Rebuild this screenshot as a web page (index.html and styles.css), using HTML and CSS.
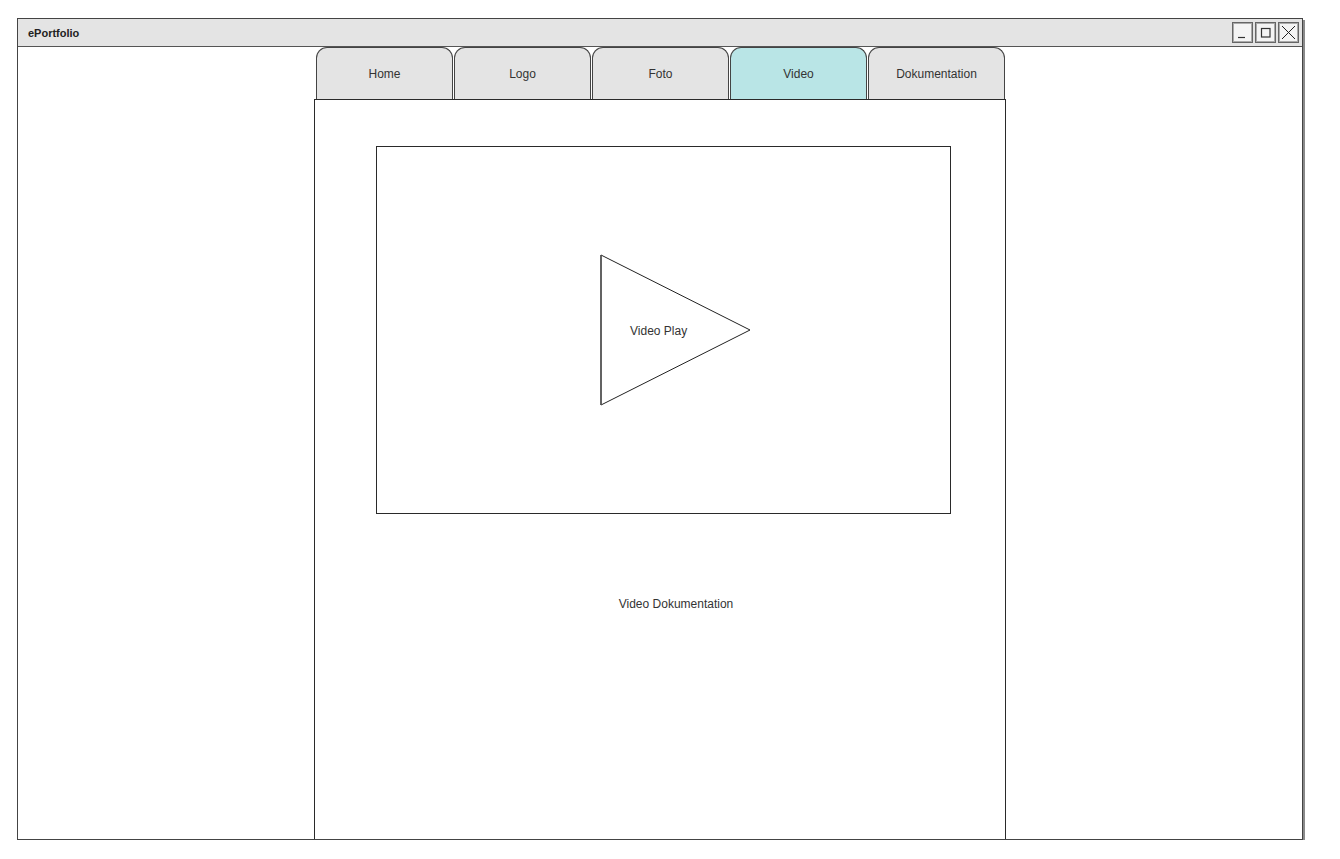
FILE: index.html
```html
<!DOCTYPE html>
<html lang="de">
<head>
    <meta charset="UTF-8">
    <meta name="viewport" content="width=device-width, initial-scale=1.0">
    <title>ePortfolio</title>
    <link rel="stylesheet" href="styles.css">
</head>
<body>
    <div class="window">
        <div class="titlebar">
            <span class="titel">ePortfolio</span>
            <div class="fenster-knoepfe">
                <span class="knopf">
                    <svg width="13" height="13" viewBox="0 0 13 13"><path d="M2 11.5 H9" stroke="#333" stroke-width="1.2" fill="none"/></svg>
                </span>
                <span class="knopf">
                    <svg width="13" height="13" viewBox="0 0 13 13"><rect x="2.5" y="2.5" width="8.5" height="8.5" stroke="#333" stroke-width="1.2" fill="none"/></svg>
                </span>
                <span class="knopf">
                    <svg width="15" height="15" viewBox="0 0 15 15"><path d="M1 1 L14 14 M14 1 L1 14" stroke="#222" stroke-width="1" fill="none"/></svg>
                </span>
            </div>
        </div>
        <div class="fenster-inhalt">
            <div class="seite">
                <nav class="tabs">
                    <a class="tab">Home</a>
                    <a class="tab">Logo</a>
                    <a class="tab">Foto</a>
                    <a class="tab aktiv">Video</a>
                    <a class="tab">Dokumentation</a>
                </nav>
                <main class="panel">
                    <div class="video-box">
                        <div class="play">
                            <svg width="152" height="152" viewBox="0 0 152 152">
                                <path d="M1 1 L150 76 L1 151 Z" fill="#fff" stroke="#222" stroke-width="1"/>
                                <path d="M1 1 V151" stroke="#555" stroke-width="1.5"/>
                            </svg>
                            <span class="play-text">Video Play</span>
                        </div>
                    </div>
                    <p class="video-doku">Video Dokumentation</p>
                </main>
            </div>
        </div>
    </div>
</body>
</html>
```

FILE: styles.css
```css
:root {
    --linie: #2a2a2a;
    --grau: #e4e4e4;
    --aktiv: #b9e5e6;
    --text: #333333;
}
body {
    margin: 0;
    padding: 0;
    background-color: #ffffff;
    font-family: 'Liberation Sans', Arial, sans-serif;
    color: var(--text);
}
.window {
    margin: 18px 0 0 17px;
    width: 1284px;
    height: 820px;
    border: 1px solid #444;
    box-shadow: 2px 2px 0 #8a8a8a;
    display: flex;
    flex-direction: column;
    background-color: #ffffff;
}
.titlebar {
    height: 27px;
    background-color: var(--grau);
    border-bottom: 1px solid #555;
    display: flex;
    align-items: center;
    justify-content: space-between;
    padding: 0 3px 0 10px;
}
.titel {
    font-size: 11px;
    font-weight: bold;
    color: #222;
}
.fenster-knoepfe {
    display: flex;
    gap: 2px;
}
.knopf {
    width: 19px;
    height: 19px;
    border: 1px solid #666;
    box-shadow: inset 0 0 0 1px #aaa;
    background-color: #f4f4f4;
    display: flex;
    align-items: center;
    justify-content: center;
}
.fenster-inhalt {
    flex: 1;
    display: flex;
    justify-content: center;
}
.seite {
    width: 692px;
    display: flex;
    flex-direction: column;
    align-items: center;
}
.tabs {
    width: 689px;
    height: 53px;
    display: flex;
    gap: 1px;
    margin-bottom: -1px;
    margin-left: 1px;
}
.tab {
    flex: 1;
    background-color: var(--grau);
    border: 1px solid #444;
    border-bottom: none;
    border-radius: 11px 11px 0 0;
    display: flex;
    align-items: center;
    justify-content: center;
    font-size: 12px;
    color: var(--text);
}
.tab.aktiv {
    background-color: var(--aktiv);
}
.panel {
    flex: 1;
    width: 690px;
    border: 1px solid var(--linie);
    border-bottom: none;
    display: flex;
    flex-direction: column;
}
.video-box {
    width: 575px;
    height: 368px;
    margin: 46px 0 0 61px;
    border: 1px solid var(--linie);
    display: flex;
    align-items: center;
    padding-left: 223px;
    box-sizing: border-box;
}
.play {
    position: relative;
    width: 152px;
    height: 152px;
}
.play svg {
    display: block;
}
.play-text {
    position: absolute;
    left: 30px;
    top: 70px;
    font-size: 12px;
    color: var(--text);
}
.video-doku {
    margin: 83px 0 0 0;
    text-align: center;
    font-size: 12px;
    padding-left: 32px;
}
```
